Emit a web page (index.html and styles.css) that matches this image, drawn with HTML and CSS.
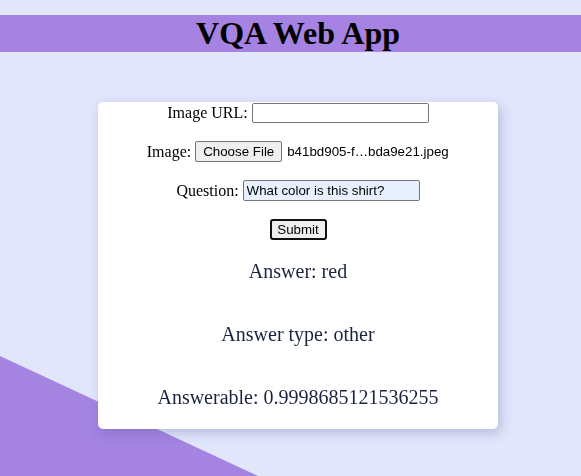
FILE: index.html
```html
<!DOCTYPE html>
<html lang="en">
<head>
<meta charset="utf-8">
<title>VQA Web App</title>
<link rel="stylesheet" href="styles.css">
</head>
<body>
<div class="corner"></div>
<header class="bar">
  <h1 class="title">VQA Web App</h1>
</header>
<main class="stage">
  <section class="card">
    <form class="form">
      <div class="row">
        <label class="lbl" for="url">Image URL:</label>
        <input class="field" id="url" type="text">
      </div>
      <div class="row">
        <span class="lbl">Image:</span>
        <span class="file">
          <button class="choose" type="button">Choose File</button>
          <span class="fname">b41bd905-f…bda9e21.jpeg</span>
        </span>
      </div>
      <div class="row">
        <label class="lbl" for="q">Question:</label>
        <input class="field filled" id="q" type="text" value="What color is this shirt?">
      </div>
      <div class="row">
        <button class="submit" type="button">Submit</button>
      </div>
    </form>
    <div class="results">
      <p class="res">Answer: red</p>
      <p class="res">Answer type: other</p>
      <p class="res">Answerable: 0.9998685121536255</p>
    </div>
  </section>
</main>
</body>
</html>
```
FILE: styles.css
```css
html, body {
  margin: 0;
  padding: 0;
}
body {
  background: #e2e6fb;
  font-family: "Liberation Serif", "Times New Roman", serif;
  color: #000;
  min-height: 100vh;
  overflow: hidden;
}
.corner {
  position: fixed;
  left: 0;
  bottom: 0;
  width: 258px;
  height: 120px;
  background: #a483e1;
  clip-path: polygon(0 0, 100% 100%, 0 100%);
  z-index: 0;
}
.bar {
  margin-top: 15px;
  background: #a683e3;
  padding-left: 15px;
}
.title {
  margin: 0;
  font-size: 32px;
  font-weight: bold;
  line-height: 37px;
  text-align: center;
}
.stage {
  margin-top: 50px;
  padding-left: 15px;
  display: flex;
  justify-content: center;
  position: relative;
  z-index: 1;
}
.card {
  width: 400px;
  background: #fff;
  border-radius: 5px;
  box-shadow: 3px 4px 12px rgba(70, 80, 140, 0.28);
  display: flex;
  flex-direction: column;
}
.form {
  display: flex;
  flex-direction: column;
  gap: 18px;
  margin: 0;
}
.row {
  height: 21px;
  display: flex;
  align-items: center;
  justify-content: center;
  gap: 4px;
  font-size: 16px;
}
.lbl {
  line-height: 18px;
}
.field {
  box-sizing: border-box;
  width: 177px;
  height: 20px;
  margin: 0;
  padding: 1px 3px;
  border: 1px solid #767676;
  border-radius: 2px;
  background: #fff;
  font-family: "Liberation Sans", Arial, sans-serif;
  font-size: 13.33px;
  color: #000;
}
.filled {
  height: 21px;
  background: #e8f0fe;
}
.file {
  width: 254px;
  display: flex;
  align-items: center;
}
.choose {
  box-sizing: border-box;
  width: 87px;
  height: 21px;
  margin: 0;
  padding: 0 6px;
  border: 1px solid #767676;
  border-radius: 2px;
  background: #efefef;
  font-family: "Liberation Sans", Arial, sans-serif;
  font-size: 13.33px;
  color: #000;
}
.fname {
  margin-left: 5px;
  font-family: "Liberation Sans", Arial, sans-serif;
  font-size: 13.33px;
  color: #000;
  white-space: nowrap;
}
.submit {
  box-sizing: border-box;
  width: 57px;
  height: 21px;
  margin: 0;
  padding: 0;
  border: 2px solid #101010;
  border-radius: 3px;
  background: #efefef;
  font-family: "Liberation Sans", Arial, sans-serif;
  font-size: 13.33px;
  color: #000;
}
.results {
  display: flex;
  flex-direction: column;
  gap: 40px;
  padding: 20px 0;
  text-align: center;
}
.res {
  margin: 0;
  font-size: 20px;
  line-height: 23px;
  color: #1b2340;
}
```
